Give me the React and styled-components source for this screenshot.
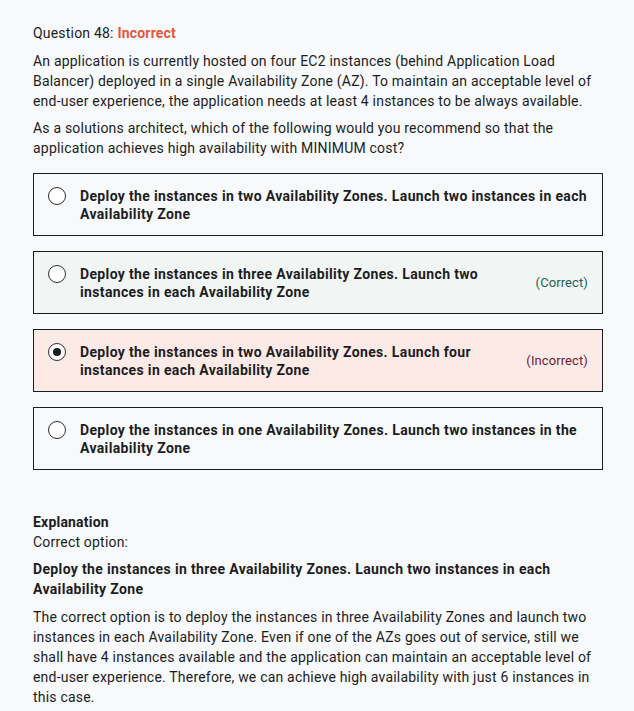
import React from "react";
import styled, { createGlobalStyle } from "styled-components";

const GlobalStyle = createGlobalStyle`
  html, body {
    margin: 0;
    padding: 0;
    background-color: #f7f9fa;
  }
  body {
    font-family: Roboto, "Liberation Sans", sans-serif;
    color: #1c1d1f;
    letter-spacing: 0.2px;
    -webkit-font-smoothing: antialiased;
  }
`;

const Page = styled.div`
  padding: 23px 31px 20px 33px;
  display: flex;
  flex-direction: column;
`;

const Title = styled.div`
  font-size: 14px;
  line-height: 20px;
`;

const Status = styled.span`
  font-weight: 700;
  color: #e2583d;
`;

const Para = styled.p`
  margin: ${(p) => p.$top || 8}px 0 0;
  font-size: 14px;
  line-height: 20px;
`;

const Options = styled.div`
  display: flex;
  flex-direction: column;
  gap: 15px;
  margin-top: 15px;
`;

const Option = styled.div`
  display: flex;
  align-items: center;
  min-height: 37px;
  padding: 12px 14px;
  border: 1px solid #1c1d1f;
  background-color: ${(p) =>
    p.$state === "correct" ? "#f1f5f4" : p.$state === "wrong" ? "#fceae7" : "transparent"};
`;

const Radio = styled.span`
  flex: none;
  align-self: flex-start;
  box-sizing: border-box;
  width: 18px;
  height: 18px;
  margin-top: 1px;
  margin-right: 14px;
  border-radius: 50%;
  border: 1.5px solid #2d2f31;
  background-color: #fff;
  display: flex;
  align-items: center;
  justify-content: center;

  &::after {
    content: "";
    display: ${(p) => (p.$checked ? "block" : "none")};
    width: 8px;
    height: 8px;
    border-radius: 50%;
    background-color: #1c1d1f;
  }
`;

const OptionText = styled.div`
  flex: 1;
  font-size: 14px;
  line-height: 18px;
  font-weight: 700;
  letter-spacing: 0.35px;
`;

const Verdict = styled.span`
  flex: none;
  margin-left: 40px;
  font-size: 13px;
  letter-spacing: 0.1px;
  color: ${(p) => (p.$state === "correct" ? "#1e6055" : "#6b2133")};
`;

const Explanation = styled.div`
  margin-top: 42px;
  font-size: 14px;
  line-height: 20px;
`;

const Heading = styled.div`
  font-weight: 700;
`;

const Answer = styled.div`
  margin-top: 7px;
  font-weight: 700;
  line-height: 20px;
  letter-spacing: 0.35px;
`;

const options = [
  {
    text: "Deploy the instances in two Availability Zones. Launch two instances in each Availability Zone",
  },
  {
    text: "Deploy the instances in three Availability Zones. Launch two instances in each Availability Zone",
    state: "correct",
    label: "(Correct)",
  },
  {
    text: "Deploy the instances in two Availability Zones. Launch four instances in each Availability Zone",
    state: "wrong",
    label: "(Incorrect)",
    checked: true,
  },
  {
    text: "Deploy the instances in one Availability Zones. Launch two instances in the Availability Zone",
  },
];

function App() {
  return (
    <Page>
      <GlobalStyle />
      <Title>
        Question 48: <Status>Incorrect</Status>
      </Title>
      <Para>
        An application is currently hosted on four EC2 instances (behind
        Application Load Balancer) deployed in a single Availability Zone (AZ).
        To maintain an acceptable level of end-user experience, the application
        needs at least 4 instances to be always available.
      </Para>
      <Para $top={7}>
        As a solutions architect, which of the following would you recommend so
        that the application achieves high availability with MINIMUM cost?
      </Para>

      <Options>
        {options.map((o, i) => (
          <Option key={i} $state={o.state}>
            <Radio $checked={o.checked} />
            <OptionText>{o.text}</OptionText>
            {o.label && <Verdict $state={o.state}>{o.label}</Verdict>}
          </Option>
        ))}
      </Options>

      <Explanation>
        <Heading>Explanation</Heading>
        <div>Correct option:</div>
        <Answer>
          Deploy the instances in three Availability Zones. Launch two instances
          in each Availability Zone
        </Answer>
        <Para>
          The correct option is to deploy the instances in three Availability
          Zones and launch two instances in each Availability Zone. Even if one
          of the AZs goes out of service, still we shall have 4 instances
          available and the application can maintain an acceptable level of
          end-user experience. Therefore, we can achieve high availability with
          just 6 instances in this case.
        </Para>
      </Explanation>
    </Page>
  );
}

export default App;
